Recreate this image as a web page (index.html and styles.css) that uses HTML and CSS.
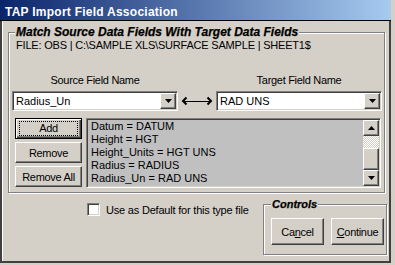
FILE: index.html
```html
<!DOCTYPE html>
<html lang="en">
<head>
<meta charset="UTF-8">
<meta name="viewport" content="width=device-width, initial-scale=1.0">
<title>TAP Import Field Association</title>
<link rel="stylesheet" href="styles.css">
</head>
<body>
<div class="window">
    <div class="titlebar">TAP Import Field Association</div>
    <div class="client">
        <fieldset class="group match">
            <legend>Match Source Data Fields With Target Data Fields</legend>
            <div class="file">FILE: OBS | C:\SAMPLE XLS\SURFACE SAMPLE | SHEET1$</div>
            <div class="fields">
                <div class="field">
                    <label for="sourceField">Source Field Name</label>
                    <div class="combo" id="sourceField">
                        <span class="value">Radius_Un</span>
                        <span class="drop"><svg width="7" height="4" viewBox="0 0 7 4"><path d="M0 0h7L3.5 4z" fill="#000"/></svg></span>
                    </div>
                </div>
                <svg class="link" width="38" height="20" viewBox="0 0 38 20">
                    <path d="M8.5 6.5L5 10l3.5 3.5M29.5 6.5L33 10l-3.5 3.5" stroke="#000" stroke-width="2" fill="none"/>
                    <path d="M6 10.5h26" stroke="#000" stroke-width="1"/>
                </svg>
                <div class="field">
                    <label for="targetField">Target Field Name</label>
                    <div class="combo" id="targetField">
                        <span class="value">RAD UNS</span>
                        <span class="drop"><svg width="7" height="4" viewBox="0 0 7 4"><path d="M0 0h7L3.5 4z" fill="#000"/></svg></span>
                    </div>
                </div>
            </div>
            <div class="assoc">
                <div class="actions">
                    <button class="btn default"><span class="focus">Add</span></button>
                    <button class="btn">Remove</button>
                    <button class="btn">Remove All</button>
                </div>
                <div class="list">
                    <ul class="items">
                        <li>Datum = DATUM</li>
                        <li>Height = HGT</li>
                        <li>Height_Units = HGT UNS</li>
                        <li>Radius = RADIUS</li>
                        <li>Radius_Un = RAD UNS</li>
                    </ul>
                    <div class="scrollbar">
                        <span class="sb-btn"><svg width="7" height="4" viewBox="0 0 7 4"><path d="M0 4h7L3.5 0z" fill="#000"/></svg></span>
                        <span class="track"></span>
                        <span class="thumb"></span>
                        <span class="sb-btn"><svg width="7" height="4" viewBox="0 0 7 4"><path d="M0 0h7L3.5 4z" fill="#000"/></svg></span>
                    </div>
                </div>
            </div>
        </fieldset>
        <div class="bottom">
            <label class="check"><span class="box"></span>Use as Default for this type file</label>
            <fieldset class="group controls">
                <legend>Controls</legend>
                <button class="btn big">Ca<u>n</u>cel</button>
                <button class="btn big"><u>C</u>ontinue</button>
            </fieldset>
        </div>
    </div>
</div>
</body>
</html>
```

FILE: styles.css
```css
* {
    box-sizing: border-box;
}
body {
    margin: 0;
    background: #d4d0c8;
    font-family: "Liberation Sans", Arial, sans-serif;
    font-size: 11px;
    letter-spacing: -0.3px;
    color: #000;
}
.window {
    width: 391px;
    height: 263px;
    display: flex;
    flex-direction: column;
}
.titlebar {
    height: 21px;
    padding: 3px 0 0 5px;
    border-bottom: 1px solid #000;
    background: linear-gradient(to right, #0a246a, #a6caf0);
    color: #fff;
    font-weight: bold;
    font-size: 12px;
    letter-spacing: 0.25px;
    line-height: 18px;
    white-space: nowrap;
}
.client {
    flex: 1;
    border: 2px solid #404040;
    border-top: none;
    box-shadow: inset 1px 0 #fff;
    padding-left: 6px;
}

/* etched group boxes */
.group {
    margin: 0;
    border: 1px solid #808080;
    box-shadow: inset 1px 1px #fff, 1px 1px #fff;
}
.group legend {
    padding: 0 1px;
    background: #d4d0c8;
    font-weight: bold;
    font-style: italic;
    font-size: 12px;
    letter-spacing: 0;
    line-height: 13px;
    -webkit-text-stroke: 0.25px #000;
}
.match {
    width: 377px;
    margin-top: 5px;
    padding: 0 2px 4px 3px;
}
.match legend {
    margin-left: 3px;
}
.file {
    height: 13px;
    line-height: 13px;
    padding-left: 4px;
    letter-spacing: -0.2px;
}
.fields {
    display: flex;
    margin-top: 22px;
}
.field {
    display: flex;
    flex-direction: column;
    align-items: center;
    gap: 4px;
    width: 166px;
}
.field label {
    line-height: 13px;
}
.link {
    align-self: flex-end;
}

/* sunken controls */
.combo, .list, .box {
    border: 1px solid;
    border-color: #808080 #fff #fff #808080;
    box-shadow: inset 1px 1px #404040, inset -1px -1px #d4d0c8;
}
.combo {
    display: flex;
    align-items: center;
    width: 166px;
    height: 20px;
    padding: 1px;
    background: #fff;
    letter-spacing: 0;
}
.combo .value {
    flex: 1;
    padding-left: 2px;
}

/* raised bits */
.btn, .drop, .sb-btn, .thumb {
    background: #d4d0c8;
    border: 1px solid;
    border-color: #fff #404040 #404040 #fff;
    box-shadow: inset -1px -1px #808080;
}
.drop, .sb-btn {
    display: flex;
    align-items: center;
    justify-content: center;
    width: 16px;
    height: 16px;
}
.btn {
    display: block;
    height: 21px;
    padding: 0;
    font: inherit;
    letter-spacing: inherit;
    color: #000;
}
.btn.default {
    border: 1px solid #000;
    box-shadow: inset 1px 1px #fff, inset -1px -1px #404040, inset -2px -2px #808080;
}
.focus {
    display: block;
    height: 15px;
    margin: 0 3px;
    border: 1px dotted #000;
    line-height: 13px;
}
.btn.big {
    width: 53px;
    height: 27px;
}

.assoc {
    display: flex;
    margin-top: 7px;
}
.actions {
    display: flex;
    flex-direction: column;
    gap: 3px;
    width: 67px;
    margin-left: 3px;
}
.actions .btn {
    width: 67px;
}
.list {
    display: flex;
    width: 295px;
    height: 70px;
    margin-left: 4px;
    padding: 1px;
    background: #c0c0c0;
}
.items {
    flex: 1;
    margin: 0;
    padding: 0 0 0 3px;
    list-style: none;
    line-height: 13px;
    letter-spacing: 0;
}
.scrollbar {
    display: flex;
    flex-direction: column;
    width: 16px;
}
.track {
    height: 12px;
    background: repeating-conic-gradient(#fff 0 25%, #d4d0c8 0 50%) 0 0 / 2px 2px;
}
.thumb {
    height: 22px;
}

.bottom {
    display: flex;
    align-items: flex-start;
}
.check {
    display: flex;
    align-items: center;
    gap: 6px;
    height: 13px;
    margin: 10px 0 0 79px;
    letter-spacing: -0.2px;
}
.box {
    width: 13px;
    height: 13px;
    background: #fff;
}
.controls {
    display: flex;
    gap: 7px;
    width: 124px;
    height: 57px;
    margin: 5px 2px 0 auto;
    padding: 0 0 0 7px;
}
.controls legend {
    font-size: 11px;
}
.controls .btn {
    margin-top: 7px;
}
```
